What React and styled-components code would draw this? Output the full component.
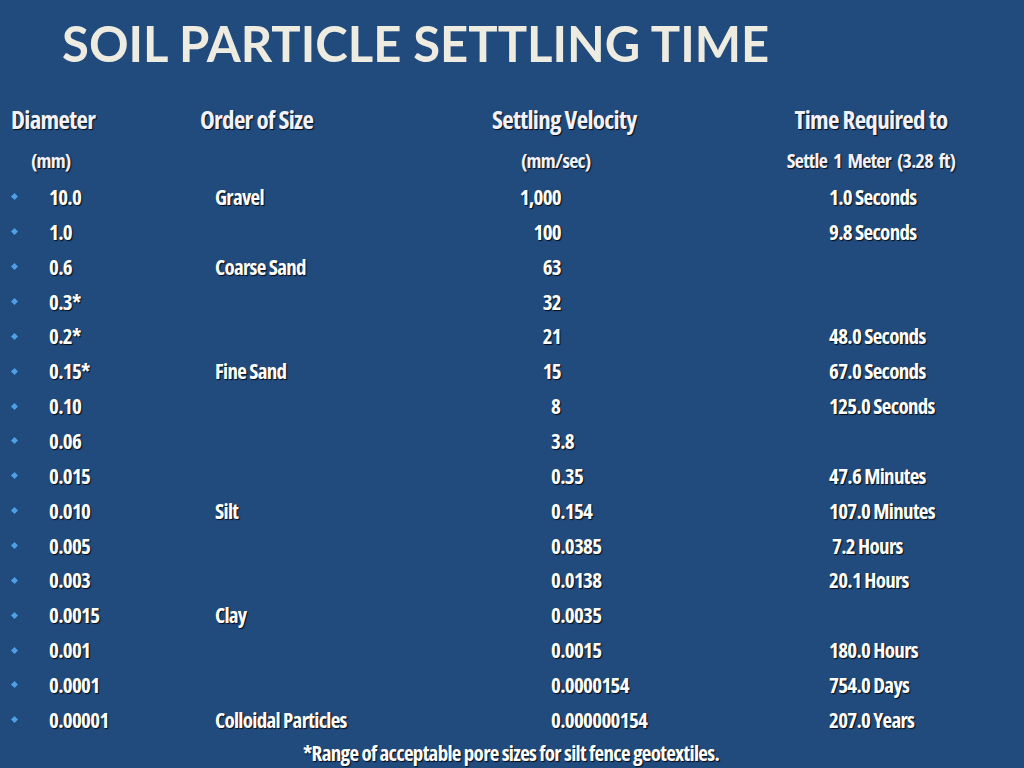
import React from 'react';
import styled, { createGlobalStyle } from 'styled-components';

const GlobalStyle = createGlobalStyle`
  html, body {
    margin: 0;
    padding: 0;
    background: #214a7d;
  }
`;

const Slide = styled.div`
  width: 1024px;
  height: 768px;
  background: #214a7d;
  color: #ffffff;
  font-family: 'Open Sans', 'Noto Sans', sans-serif;
  font-stretch: 75%;
  overflow: hidden;
  display: flex;
  flex-direction: column;
`;

const Title = styled.h1`
  flex-shrink: 0;
  margin: 0;
  height: 96px;
  padding-left: 62px;
  padding-bottom: 10px;
  box-sizing: border-box;
  display: flex;
  align-items: center;
  font-family: Lato, 'Open Sans', sans-serif;
  font-stretch: normal;
  font-weight: 700;
  font-size: 49px;
  color: #eeece1;
`;

const shadow = `text-shadow: 1px 1px 1px rgba(0, 0, 0, 0.85);`;

const HeadRow = styled.div`
  flex-shrink: 0;
  display: grid;
  grid-template-columns: 200px 292px 268px 222px;
  height: ${(p) => p.h}px;
  align-items: center;
  font-weight: 700;
  font-size: ${(p) => p.size}px;
  letter-spacing: ${(p) => p.ls}px;
  word-spacing: ${(p) => p.ws || 0}px;
  color: #f2f2ff;
  ${shadow}
`;

const HeadCell = styled.div`
  padding-left: ${(p) => p.pad || 0}px;
  text-align: ${(p) => (p.center ? 'center' : 'left')};
  white-space: pre;
`;

const Rows = styled.div`
  flex-shrink: 0;
  display: flex;
  flex-direction: column;
`;

const Row = styled.div`
  flex-shrink: 0;
  display: grid;
  grid-template-columns: 49px 166px 275px 339px 1fr;
  height: 34.87px;
  align-items: center;
  font-weight: 700;
  font-size: 21px;
  letter-spacing: -0.7px;
  ${shadow}
`;

const Bullet = styled.div`
  justify-self: start;
  margin-left: 12px;
  width: 5px;
  height: 5px;
  background: #4d9fe8;
  transform: rotate(45deg);
`;

const Cell = styled.div`
  white-space: pre;
`;

const Velocity = styled.div`
  white-space: pre;
  ${(p) => (p.right ? `width: 71px; text-align: right;` : `padding-left: 61px;`)}
`;

const Footer = styled.div`
  flex-shrink: 0;
  height: 32px;
  display: flex;
  align-items: center;
  justify-content: center;
  padding-right: 2px;
  font-weight: 700;
  font-size: 21px;
  letter-spacing: -0.7px;
  ${shadow}
`;

const data = [
  ['10.0', 'Gravel', '1,000', true, '1.0 Seconds'],
  ['1.0', '', '100', true, '9.8 Seconds'],
  ['0.6', 'Coarse Sand', '63', true, ''],
  ['0.3*', '', '32', true, ''],
  ['0.2*', '', '21', true, '48.0 Seconds'],
  ['0.15*', 'Fine Sand', '15', true, '67.0 Seconds'],
  ['0.10', '', '8', false, '125.0 Seconds'],
  ['0.06', '', '3.8', false, ''],
  ['0.015', '', '0.35', false, '47.6 Minutes'],
  ['0.010', 'Silt', '0.154', false, '107.0 Minutes'],
  ['0.005', '', '0.0385', false, ' 7.2 Hours'],
  ['0.003', '', '0.0138', false, '20.1 Hours'],
  ['0.0015', 'Clay', '0.0035', false, ''],
  ['0.001', '', '0.0015', false, '180.0 Hours'],
  ['0.0001', '', '0.0000154', false, '754.0 Days'],
  ['0.00001', 'Colloidal Particles', '0.000000154', false, '207.0 Years'],
];

export default function App() {
  return (
    <>
      <GlobalStyle />
      <Slide>
        <Title>SOIL PARTICLE SETTLING TIME</Title>
        <HeadRow h={46} size={25} ls={-0.7}>
          <HeadCell pad={11}>Diameter</HeadCell>
          <HeadCell>Order of Size</HeadCell>
          <HeadCell>Settling Velocity</HeadCell>
          <HeadCell center>Time Required to</HeadCell>
        </HeadRow>
        <HeadRow h={37.5} size={20} ls={-0.7} ws={3}>
          <HeadCell pad={31}>(mm)</HeadCell>
          <HeadCell />
          <HeadCell pad={29}>(mm/sec)</HeadCell>
          <HeadCell center>Settle 1 Meter (3.28 ft)</HeadCell>
        </HeadRow>
        <Rows>
          {data.map(([dia, order, vel, right, time]) => (
            <Row key={dia}>
              <Bullet />
              <Cell>{dia}</Cell>
              <Cell>{order}</Cell>
              <Velocity right={right}>{vel}</Velocity>
              <Cell>{time}</Cell>
            </Row>
          ))}
        </Rows>
        <Footer>*Range of acceptable pore sizes for silt fence geotextiles.</Footer>
      </Slide>
    </>
  );
}
